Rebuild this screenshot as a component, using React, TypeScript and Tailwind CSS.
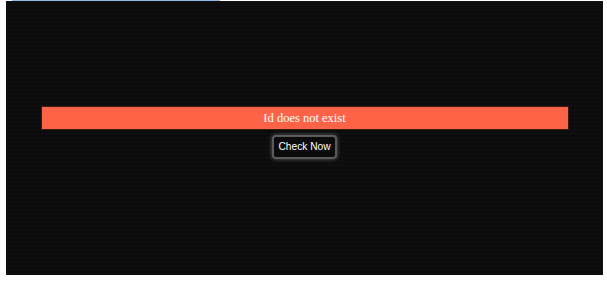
export default function App() {
  return (
    <div className="w-[607px] h-[281px] bg-white">
      <div className="pl-[12px]">
        <div className="w-[208px] h-px bg-[#8fb8e6]" />
      </div>
      <div
        className="ml-[6px] w-[597px] h-[274px] bg-[#0b0b0b] pt-[105px] px-[36px] flex flex-col items-center"
        style={{
          backgroundImage:
            "linear-gradient(rgba(255,255,255,0.015) 1px, transparent 1px), linear-gradient(90deg, rgba(255,255,255,0.015) 1px, transparent 1px)",
          backgroundSize: "4px 4px",
        }}
      >
        <div className="w-[528px] h-[24px] bg-[#ff6347] border border-[#3a1a14] flex items-center justify-center text-white text-[12.5px] leading-none" style={{ fontFamily: '"Liberation Serif", serif' }}>
          Id does not exist
        </div>
        <button
          className="mt-[5px] h-[24px] px-[4px] rounded-[4px] border-2 border-[#5a5a5a] bg-[#0b0b0b] text-white text-[10.2px] leading-none shadow-[0_0_4px_rgba(255,255,255,0.35)]"
          style={{ fontFamily: '"Liberation Sans", Arial, sans-serif' }}
        >
          Check Now
        </button>
      </div>
    </div>
  );
}
